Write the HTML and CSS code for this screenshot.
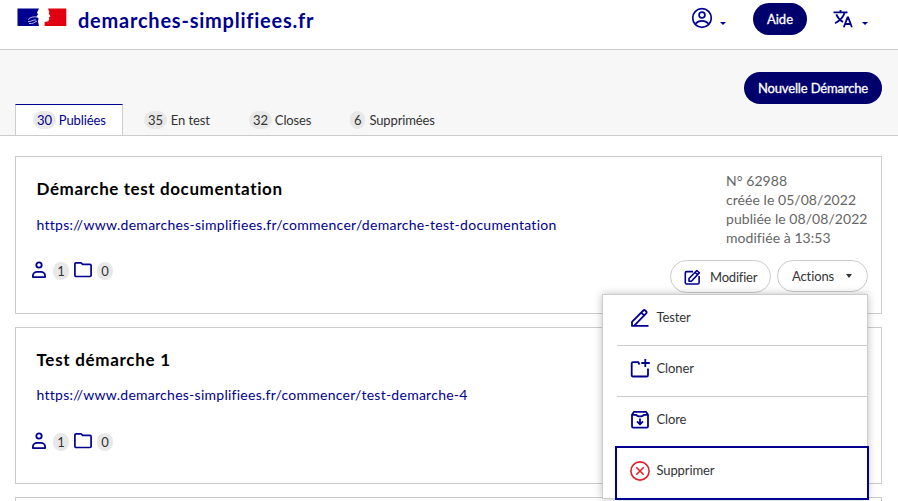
FILE: index.html
```html
<!DOCTYPE html>
<html lang="fr">
<head>
<meta charset="utf-8">
<title>demarches-simplifiees.fr</title>
<link rel="stylesheet" href="styles.css">
</head>
<body>
<svg class="defs" aria-hidden="true">
  <symbol id="person" viewBox="0 0 16 18"><g fill="none" stroke="currentColor" stroke-width="1.8"><circle cx="8" cy="4" r="2.7"/><path d="M1.9 16.1v-1.4c0-2.3 2-3.8 4.2-3.8h3.8c2.2 0 4.2 1.5 4.2 3.8v1.4z" stroke-linejoin="round"/></g></symbol>
  <symbol id="folder" viewBox="0 0 20 18"><path d="M1.9 14.300V3c0-.7.5-1.200 1.200-1.200h5l1.600 1.600h7.200c.7 0 1.200.5 1.200 1.200v9.700c0 .7-.5 1.200-1.200 1.200H3.100c-.7 0-1.200-.5-1.200-1.200z" fill="none" stroke="currentColor" stroke-width="1.7"/></symbol>
</svg>
<header class="header">
  <svg class="flag" viewBox="0 0 50 19">
    <path fill="#000091" d="M.5.5h21.500l-2 4 1 2-1.600 2 2.100 2-.5 3 1 4.500H.5z"/>
    <path fill="#e1000f" d="M31 .5h18.300v17.500H27.600v-4l3.700-.7 1-2.300-.5-1.600 1.700-1.200-1.700-2.400.4-2z"/>
    <path d="M11 11.500c3-2.500 5-3 9-2.500M11 13.500c3 .5 5-2 8-1.500M12 15.500c4 .5 5-1 8-2.500" fill="none" stroke="#c9c9ec" stroke-width=".9"/>
  </svg>
  <a class="brand">demarches-simplifiees.fr</a>
  <nav class="tools">
    <span class="tool account"><svg width="22" height="22" viewBox="0 0 22 22" fill="none" stroke="currentColor" stroke-width="1.7"><circle cx="11" cy="11" r="9.300"/><circle cx="11" cy="8" r="2.900"/><path d="M4.500 16.800c1.600-2 3.700-3 6.500-3s4.900 1 6.500 3"/></svg><i class="caret"></i></span>
    <a class="pill help">Aide</a>
    <span class="tool lang"><svg width="20" height="20" viewBox="0 0 20 20" fill="none" stroke="currentColor" stroke-width="1.8"><path d="M.5 3.300h14M7.500 1v2.300M3.300 5.300c1.300 3.200 3.700 6 6.700 7.800M11.700 3.600C10.400 8.200 7 11.800 2 14.200M10.800 18.200l3.700-9.700h.7l3.700 9.700M12.200 15h5.300"/></svg><i class="caret"></i></span>
  </nav>
</header>
<section class="subhead">
  <a class="pill create">Nouvelle Démarche</a>
  <ul class="tabs">
    <li class="tab active"><span class="badge">30</span><b>Publiées</b></li>
    <li class="tab t2"><span class="badge">35</span><b>En test</b></li>
    <li class="tab t3"><span class="badge">32</span><b>Closes</b></li>
    <li class="tab t4"><span class="badge">6</span><b>Supprimées</b></li>
  </ul>
</section>
<main class="list">
  <article class="card first">
    <div class="info">
      <h2 class="title">Démarche test documentation</h2>
      <a class="link">https://www.demarches-simplifiees.fr/commencer/demarche-test-documentation</a>
      <div class="counts"><svg class="person"><use href="#person"/></svg><span class="badge">1</span><svg class="folder"><use href="#folder"/></svg><span class="badge">0</span></div>
    </div>
    <div class="side">
      <div class="meta"><p>N° 62988</p><p>créée le 05/08/2022</p><p>publiée le 08/08/2022</p><p>modifiée à 13:53</p></div>
      <div class="buttons">
        <a class="btn edit"><svg width="17" height="17" viewBox="0 0 17 17" fill="none" stroke="currentColor" stroke-width="1.6" stroke-linejoin="round"><path d="M9 2.600H2.600c-.8 0-1.300.5-1.300 1.300v9.800c0 .8.5 1.300 1.300 1.300h11.200c.8 0 1.300-.5 1.300-1.300V7M5 12.200V9.500l7.800-8 2.500 2.400-7.900 8.300zM11 3.300l2.500 2.500"/></svg><span>Modifier</span></a>
        <a class="btn actions"><span>Actions</span><i class="caret"></i></a>
        <div class="menu">
          <a class="item"><svg viewBox="0 0 20 20" fill="none" stroke="currentColor" stroke-width="1.8" stroke-linejoin="round"><path d="M2 17.900v-4L13.300 2.500c.6-.6 1.300-.6 1.900 0l1 1c.6.6.6 1.300 0 1.900L4.500 17.400M11.300 4.600l3 3M1.300 17.900H18.500"/></svg><span>Tester</span></a>
          <a class="item"><svg viewBox="0 0 20 20" fill="none" stroke="currentColor" stroke-width="1.8"><path d="M9.500 5.500L8.300 3.200H3c-.8 0-1.300.5-1.300 1.300v11.700c0 .8.5 1.300 1.300 1.300h13.700c.8 0 1.300-.5 1.300-1.300V9.500M15.300 0v8M11.300 4h8.500"/></svg><span>Cloner</span></a>
          <a class="item"><svg viewBox="0 0 20 20" fill="none" stroke="currentColor" stroke-width="1.8" stroke-linejoin="round"><path d="M2 4.800v11.600c0 .7.5 1.200 1.200 1.200h13.600c.7 0 1.200-.5 1.200-1.200V4.800l-2-3H4zM2 4.800h4.300c.5 1.200 2 1.600 3.700 1.600s3.200-.4 3.700-1.600H18M10 8.500v5.500M7 11.300l3 3 3-3"/></svg><span>Clore</span></a>
          <a class="item danger"><svg viewBox="0 0 20 20" fill="none" stroke="currentColor" stroke-width="1.6"><circle cx="10" cy="10" r="9.100"/><path d="M6.300 6.300l7.400 7.400M13.700 6.300l-7.400 7.400"/></svg><span>Supprimer</span></a>
        </div>
      </div>
    </div>
  </article>
  <article class="card second">
    <div class="info">
      <h2 class="title">Test démarche 1</h2>
      <a class="link">https://www.demarches-simplifiees.fr/commencer/test-demarche-4</a>
      <div class="counts"><svg class="person"><use href="#person"/></svg><span class="badge">1</span><svg class="folder"><use href="#folder"/></svg><span class="badge">0</span></div>
    </div>
  </article>
  <article class="card next"></article>
</main>
</body>
</html>
```
FILE: styles.css
```css
* { box-sizing: border-box; }
body { display: flex; flex-direction: column; margin: 0; height: 501px; overflow: hidden; background: #fff; color: #333; font: 13px/20px Lato, "Liberation Sans", sans-serif; white-space: nowrap; }
.defs { display: none; }
h2, p, ul { margin: 0; padding: 0; }
b { font-weight: 400; }
svg { flex: none; }
.header { display: flex; flex: none; height: 50px; padding-left: 17px; border-bottom: 1px solid #ccc; color: #000091; }
.flag { width: 50px; height: 19px; margin-top: 8px; }
.brand { width: 236px; margin: 7px 0 0 11px; font-size: 20px; line-height: 26px; font-weight: 700; letter-spacing: .77px; }
.tools { display: flex; margin-left: auto; }
.tool { display: flex; }
.account { width: 62px; padding-top: 7px; }
.account .caret { margin: 15px 0 0 7px; }
.lang { width: 65px; margin-left: 26px; padding-top: 9px; }
.lang .caret { margin: 13px 0 0 9px; }
.caret { width: 0; height: 0; border: 3px solid transparent; border-top: 4px solid currentColor; border-bottom: 0; }
.tool .caret { border-width: 3px 3px 0; }
.pill { display: flex; align-items: center; justify-content: center; height: 32px; border-radius: 16px; background: #00006d; color: #fff; letter-spacing: 0; -webkit-text-stroke: .3px #fff; }
.help { width: 54px; margin-top: 3px; }
.subhead { display: flex; flex: none; flex-direction: column; height: 86px; padding-top: 22px; background: #f7f7f7; border-bottom: 1px solid #ccc; }
.create { width: 138px; margin: 0 16px 0 auto; letter-spacing: -.15px; }
.tabs { display: flex; height: 32px; padding-left: 15px; list-style: none; }
.tab { display: flex; align-items: center; gap: 3px; padding-top: 1px; border: solid transparent; border-width: 1px 1px 0; letter-spacing: -.12px; }
.tab.active { width: 108px; padding: 1px 0 0 17px; border-color: #000091 #ccc; background: #fff; color: #000091; }
.t2 { width: 105px; padding-left: 20px; gap: 4px; }
.t3 { width: 101px; padding-left: 20px; }
.t4 { padding-left: 20px; gap: 4px; }
.badge { display: inline-flex; align-items: center; justify-content: center; min-width: 15px; height: 18px; padding: 0 4px; border-radius: 9px; background: #e8e8e8; font-size: 13px; }
.list { flex: 1; min-height: 0; overflow: hidden; padding: 20px 16px 0 15px; }
.card { display: flex; justify-content: space-between; height: 157px; margin-bottom: 13px; border: 1px solid #ccc; }
.card.first { height: 158px; }
.card.next { height: 4px; margin: 0; border-bottom: 0; }
.info { padding: 20px 0 0 20.5px; }
.title { color: #000; font-size: 17px; line-height: 24px; font-weight: 700; letter-spacing: .6px; }
.second .title { letter-spacing: .7px; }
.link { display: block; margin-top: 14px; color: #000091; font-size: 14px; letter-spacing: .28px; }
.second .link { margin-top: 13px; letter-spacing: .26px; }
.counts { display: flex; align-items: flex-end; height: 20px; margin: 25px 0 0 -5.5px; color: #000091; }
.second .counts { margin-top: 26px; }
.counts .badge { min-width: 16px; color: #333; }
.person { width: 16px; height: 18px; margin: 0 6px 1px 0; }
.folder { width: 20px; height: 18px; margin: 0 4px 1px; }
.side { width: 198px; margin-right: 13px; padding-top: 14px; }
.meta { margin-left: 56px; color: #666; font-size: 14px; line-height: 19px; letter-spacing: .05px; }
.buttons { position: relative; display: flex; justify-content: flex-end; gap: 6px; margin-top: 13px; letter-spacing: -.12px; }
.btn { display: flex; flex: none; align-items: center; height: 33px; border: 1px solid #ccc; border-radius: 17px; }
.edit { width: 101px; margin-left: -14px; padding-left: 13px; letter-spacing: -.2px; }
.edit svg { margin: 2px 9px 0 0; color: #000091; }
.actions { width: 91px; height: 32px; padding-left: 14px; }
.actions .caret { margin-left: 12px; }
.menu { position: absolute; z-index: 2; top: 34px; right: 0; width: 266px; height: 205px; padding-left: 14px; border: 1px solid #ccc; background: #fff; box-shadow: 0 0 8px rgba(0,0,0,.25); }
.item { display: flex; align-items: flex-start; height: 51px; padding: 12px 0 0 13px; border-bottom: 1px solid #ccc; }
.item svg { width: 20px; height: 20px; margin: 1px 6.5px 0 0; color: #000091; }
.item:nth-child(3) { border-color: transparent; }
.item.danger { height: 50px; border: 0; outline: 2px solid #000091; }
.danger svg { color: #e0222e; }
```
